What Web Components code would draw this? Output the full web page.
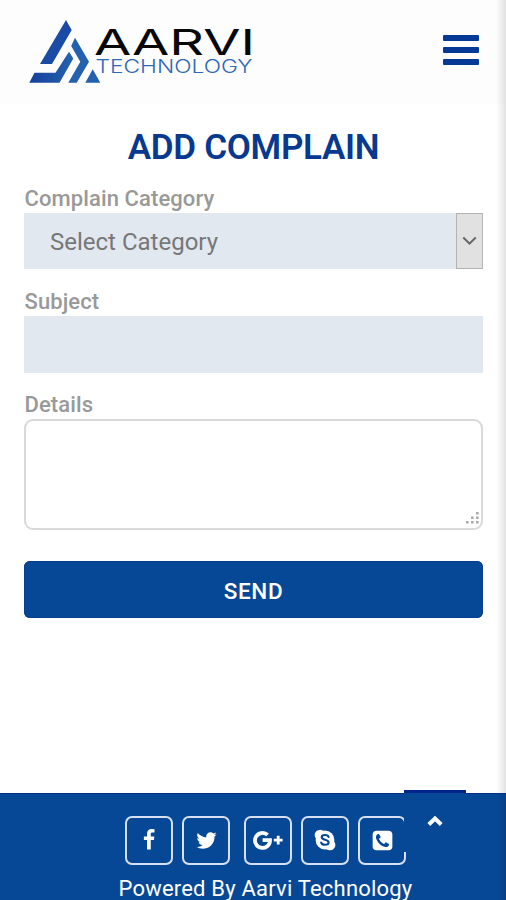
<!DOCTYPE html>
<html lang="en">
<head>
<meta charset="utf-8">
<title>Add Complain</title>
<style>
html,body{margin:0;height:100%;background:#fff;overflow:hidden}
body{font-family:Roboto,"Liberation Sans",sans-serif}
</style>
</head>
<body>
<complain-page></complain-page>
<script>
const define = (name, html) => customElements.define(name, class extends HTMLElement {
  constructor() {
    super();
    const t = document.createElement('template');
    t.innerHTML = html;
    this.attachShadow({ mode: 'open' }).append(t.content.cloneNode(true));
  }
});

define('brand-logo', `
<style>:host{display:block;width:230px;height:68px}svg{display:block}text{font-family:Inter,"Liberation Sans",sans-serif}</style>
<svg width="230" height="68" viewBox="27 18 230 68">
  <defs><linearGradient id="g" x1="0" x2="1"><stop offset="0" stop-color="#173f9e"/><stop offset="1" stop-color="#2563ae"/></linearGradient></defs>
  <path fill="#1b4ba4" d="M66 20L71.7 30 52 64H40Z"/>
  <path fill="url(#g)" d="M69 51.7L73.3 58.6 59.5 82.7H29.3L34.5 72.7H55.5Z"/>
  <path fill="#2560ae" d="M75 37.7L89 61.7 76.7 82.7H68.3L80.3 61.7 71.2 46ZM92.7 69.3L100.3 82.7H85.3Z"/>
  <text x="94" y="54.8" font-size="36" font-weight="400" fill="#080808" textLength="161" lengthAdjust="spacingAndGlyphs">AARVI</text>
  <text x="95.500" y="73" font-size="18" font-weight="300" fill="#2f68b4" textLength="157" lengthAdjust="spacingAndGlyphs">TECHNOLOGY</text>
</svg>`);

define('menu-button', `
<style>:host{display:flex;flex-direction:column;gap:6px;width:36px}i{height:6px;border-radius:1px;background:#043a96}</style>
<i></i><i></i><i></i>`);

define('top-bar', `
<style>:host{display:flex;justify-content:space-between;align-items:flex-start;box-sizing:border-box;height:104px;padding:18px 27px 0;background:#fdfdfd}
menu-button{margin-top:17px}</style>
<brand-logo></brand-logo><menu-button></menu-button>`);

define('form-field', `
<style>:host{display:block}label{display:block;height:27px;line-height:26px;font-size:22px;font-weight:500;letter-spacing:.1px;color:#999;white-space:nowrap}</style>
<label><slot name="label"></slot></label><slot></slot>`);

define('select-box', `
<style>:host{display:flex;height:56px;background:#e2e8f0;color:#777;font-size:24px;line-height:59px}
span{flex:1;padding-left:26px}
b{box-sizing:border-box;width:27px;border:1px solid #b3b3b3;background:#e1e1e1;display:flex;align-items:center;justify-content:center}</style>
<span><slot></slot></span><b><svg width="15" height="10" viewBox="0 0 15 10"><path d="M1.3 1.5L7.5 7.7 13.7 1.5" fill="none" stroke="#666" stroke-width="2"/></svg></b>`);

define('text-box', `<style>:host{display:block;height:57px;background:#e2e8f0}</style>`);

define('text-area', `
<style>:host{display:flex;justify-content:flex-end;align-items:flex-end;box-sizing:border-box;height:111px;border:2px solid #d9d9d9;border-radius:9px;padding:0 2px 3px;background:#fff}</style>
<svg width="14" height="14" fill="#aaa"><path d="M11 1h2.600v2.600H11zM6 5.500h2.600v2.600H6zM11 5.500h2.600v2.600H11zM1 10h2.600v2.600H1zM6 10h2.600v2.600H6zM11 10h2.600v2.600H11z"/></svg>`);

define('send-button', `
<style>:host{display:block;height:57px;border-radius:6px;background:#074896;box-shadow:inset 0 0 0 1px #083d92;color:#fff;text-align:center;font-size:22.5px;font-weight:500;line-height:61px;letter-spacing:.6px}</style>
<slot></slot>`);

define('social-link', `
<style>:host{display:flex;align-items:center;justify-content:center;box-sizing:border-box;width:48px;height:49px;padding-bottom:1px;border:2px solid #d5e0f4;border-radius:7px;color:#fff}</style>
<slot></slot>`);

define('scroll-top', `
<style>:host{display:block;box-sizing:border-box;width:62px;height:62px;border-top:3px solid #04268a;background:#074896}
svg{display:block;margin:22px auto 0}</style>
<svg width="16" height="12" viewBox="0 0 16 12"><path d="M1.8 9.5L8 3.5 14.2 9.5" fill="none" stroke="#fff" stroke-width="4"/></svg>`);

define('page-footer', `
<style>:host{display:block;position:relative;box-sizing:border-box;height:107px;padding-top:22px;border-top:1px solid #05318d;background:#074896;color:#fff}
nav{display:flex;gap:9px;padding-left:125px}.g{margin-left:5px}
p{margin:10px 0 0 118.500px;font-size:22px;line-height:28px;white-space:nowrap;letter-spacing:.2px}
scroll-top{position:absolute;left:404px;top:-4px}svg{display:block}</style>
<nav>
<social-link><svg width="22" height="22" viewBox="0 0 1792 1792" fill="#fff"><path d="M1343 12v264h-157q-86 0-116 36t-30 108v189h293l-39 296h-254v759h-306v-759h-255v-296h255v-218q0-186 104-288.5t277-102.5q147 0 228 12z"/></svg></social-link>
<social-link><svg width="23" height="23" viewBox="0 0 1792 1792" fill="#fff"><path d="M1684 408q-67 98-162 167 1 14 1 42 0 130-38 259.5t-115.5 248.5-184.5 210.5-258 146-323 54.5q-271 0-496-145 35 4 78 4 225 0 401-138-105-2-188-64.5t-114-159.5q33 5 61 5 43 0 85-11-112-23-185.5-111.5t-73.5-205.5v-4q68 38 146 41-66-44-105-115t-39-154q0-88 44-163 121 149 294.5 238.5t371.5 99.5q-8-38-8-74 0-134 94.5-228.5t228.5-94.5q140 0 236 102 109-21 205-78-37 115-142 178 93-10 186-50z"/></svg></social-link>
<social-link class="g"><svg width="30" height="20" viewBox="0 0 30 20"><path d="M14.6 4.9A7.5 7.5 0 1 0 17 10.1H9.6" fill="none" stroke="#fff" stroke-width="3.8"/><path fill="#fff" d="M23.8 5.7h2.8v3h3v2.8h-3v3h-2.8v-3h-3V8.7h3z"/></svg></social-link>
<social-link><svg width="24" height="24" viewBox="0 0 22 22"><g fill="#fff"><circle cx="11" cy="11" r="8.6"/><circle cx="6.5" cy="6.5" r="5"/><circle cx="15.5" cy="15.5" r="5"/></g><path d="M14.3 8.3C13.5 5.8 8 5.9 8 8.5 8 11.5 14.300 10.100 14.300 13.200 14.300 16 8.200 16 7.500 13.400" fill="none" stroke="#074896" stroke-width="1.900" stroke-linecap="round"/></svg></social-link>
<social-link><svg width="23" height="23" viewBox="0 0 1792 1792" fill="#fff"><path d="M1408 1193q0-11-2-16t-18-16.5-40.5-25-47.5-26.5-45.5-25-28.5-15q-5-3-19-13t-25-15-21-5q-15 0-36.5 20.5t-39.5 45-38.5 45-33.5 20.5q-7 0-16.5-3.5t-15.5-6.5-17-9.5-14-8.5q-99-55-170-126.5t-127-170.5q-2-3-8.5-14t-9.5-17-6.5-15.5-3.5-16.5q0-13 20.5-33.5t45-38.5 45-39.5 20.5-36.5q0-10-5-21t-15-25-13-19q-3-6-15-28.5t-25-45.5-26.5-47.5-25-40.5-16.5-18-16-2q-48 0-101 22-46 21-80 94.5t-34 130.5q0 16 2.5 34t5 30.5 9 33 10 29.5 12.5 33 11 30q60 164 216.5 320.5t320.5 216.5q6 2 30 11t33 12.5 29.5 10 33 9 30.5 5 34 2.5q57 0 130.5-34t94.5-80q22-53 22-101zm256-777v960q0 119-84.5 203.5t-203.5 84.5h-960q-119 0-203.5-84.5t-84.5-203.5v-960q0-119 84.5-203.5t203.5-84.5h960q119 0 203.5 84.5t84.5 203.5z"/></svg></social-link>
</nav>
<p>Powered By Aarvi Technology</p>
<scroll-top></scroll-top>`);

define('complain-page', `
<style>:host{display:flex;flex-direction:column;position:relative;height:900px;width:506px;overflow:hidden;background:#fff}
:host::after{content:"";position:absolute;right:0;top:0;bottom:0;width:10px;background:linear-gradient(90deg,rgba(0,0,0,0),rgba(0,0,0,.11))}
main{flex:1;padding:0 23px 0 24px}
h1{margin:23px 0 18px;text-align:center;font-size:35px;line-height:41px;font-weight:600;letter-spacing:-.3px;color:#06398f;white-space:nowrap}
form-field+form-field{margin-top:20px}form-field:last-of-type{margin-top:19px}send-button{margin-top:31px}
form-field>span{padding-left:.5px}</style>
<top-bar></top-bar>
<main>
<h1>ADD COMPLAIN</h1>
<form-field><span slot="label">Complain Category</span><select-box>Select Category</select-box></form-field>
<form-field><span slot="label">Subject</span><text-box></text-box></form-field>
<form-field><span slot="label">Details</span><text-area></text-area></form-field>
<send-button>SEND</send-button>
</main>
<page-footer></page-footer>`);
</script>
</body>
</html>
